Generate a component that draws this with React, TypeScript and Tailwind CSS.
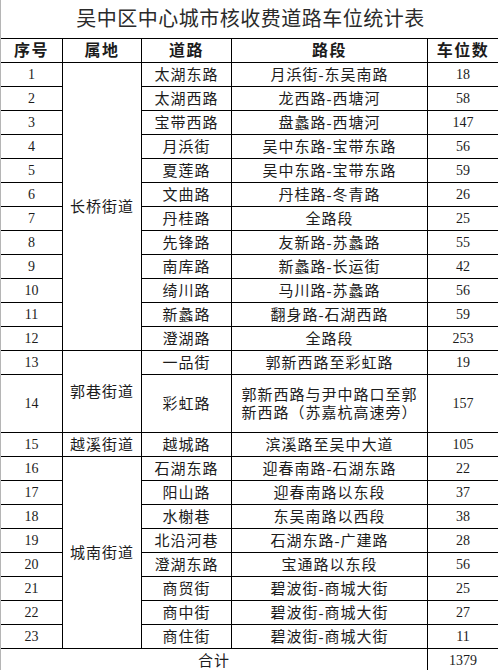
const cjk = "font-['Liberation_Serif','Noto_Sans_CJK_SC',serif]";

interface Row {
    no: number;
    area?: string;
    span?: string;
    road: string;
    section: string;
    count: number;
}

const rows: Row[] = [
    { no: 1, area: "长桥街道", span: "row-span-12", road: "太湖东路", section: "月浜街-东吴南路", count: 18 },
    { no: 2, road: "太湖西路", section: "龙西路-西塘河", count: 58 },
    { no: 3, road: "宝带西路", section: "盘蠡路-西塘河", count: 147 },
    { no: 4, road: "月浜街", section: "吴中东路-宝带东路", count: 56 },
    { no: 5, road: "夏莲路", section: "吴中东路-宝带东路", count: 59 },
    { no: 6, road: "文曲路", section: "丹桂路-冬青路", count: 26 },
    { no: 7, road: "丹桂路", section: "全路段", count: 25 },
    { no: 8, road: "先锋路", section: "友新路-苏蠡路", count: 55 },
    { no: 9, road: "南库路", section: "新蠡路-长运街", count: 42 },
    { no: 10, road: "绮川路", section: "马川路-苏蠡路", count: 56 },
    { no: 11, road: "新蠡路", section: "翻身路-石湖西路", count: 59 },
    { no: 12, road: "澄湖路", section: "全路段", count: 253 },
    { no: 13, area: "郭巷街道", span: "row-span-2", road: "一品街", section: "郭新西路至彩虹路", count: 19 },
    { no: 14, road: "彩虹路", section: "郭新西路与尹中路口至郭新西路（苏嘉杭高速旁）", count: 157 },
    { no: 15, area: "越溪街道", span: "row-span-1", road: "越城路", section: "滨溪路至吴中大道", count: 105 },
    { no: 16, area: "城南街道", span: "row-span-8", road: "石湖东路", section: "迎春南路-石湖东路", count: 22 },
    { no: 17, road: "阳山路", section: "迎春南路以东段", count: 37 },
    { no: 18, road: "水榭巷", section: "东吴南路以西段", count: 38 },
    { no: 19, road: "北沿河巷", section: "石湖东路-广建路", count: 28 },
    { no: 20, road: "澄湖东路", section: "宝通路以东段", count: 56 },
    { no: 21, road: "商贸街", section: "碧波街-商城大街", count: 25 },
    { no: 22, road: "商中街", section: "碧波街-商城大街", count: 27 },
    { no: 23, road: "商住街", section: "碧波街-商城大街", count: 11 },
];

const cell = "flex items-center justify-center text-center border-b border-black";
const line = `${cell} border-r`;
const text = `${line} ${cjk} text-[15px] tracking-[1px] leading-[18px]`;
const num = `${line} font-['Liberation_Serif',serif] text-[14px]`;
// last column has no right line, the picture is cut there
const last = `${cell} font-['Liberation_Serif',serif] text-[14px]`;

const App = () => {
    return (
        <div className="w-[498px] h-[670px] overflow-hidden bg-white border-l border-[#b5b5b5] text-[#1c1c1c]">
            <h1 className={`h-[38px] flex items-center justify-center pl-[2px] text-[20px] tracking-[0.5px] font-normal text-[#2a2a2a] ${cjk}`}>
                吴中区中心城市核收费道路车位统计表
            </h1>
            <div className="grid grid-cols-[62px_79px_90px_196px_70px] grid-rows-[repeat(14,24px)_58px_repeat(10,24px)] border-t border-black">
                {["序号", "属地", "道路", "路段", "车位数"].map((h, i) => (
                    <div key={h} className={`${i === 4 ? cell : line} ${cjk} text-[16px] font-bold tracking-[1.5px]`}>
                        {h}
                    </div>
                ))}
                {rows.map((r) => (
                    <div key={r.no} className="contents">
                        <div className={num}>{r.no}</div>
                        {r.area && <div className={`${text} ${r.span}`}>{r.area}</div>}
                        <div className={text}>{r.road}</div>
                        <div className={`${text} px-[8px]`}>{r.section}</div>
                        <div className={last}>{r.count}</div>
                    </div>
                ))}
                <div className={`${text} col-span-4`}>合计</div>
                <div className={last}>1379</div>
            </div>
        </div>
    );
};

export default App;
